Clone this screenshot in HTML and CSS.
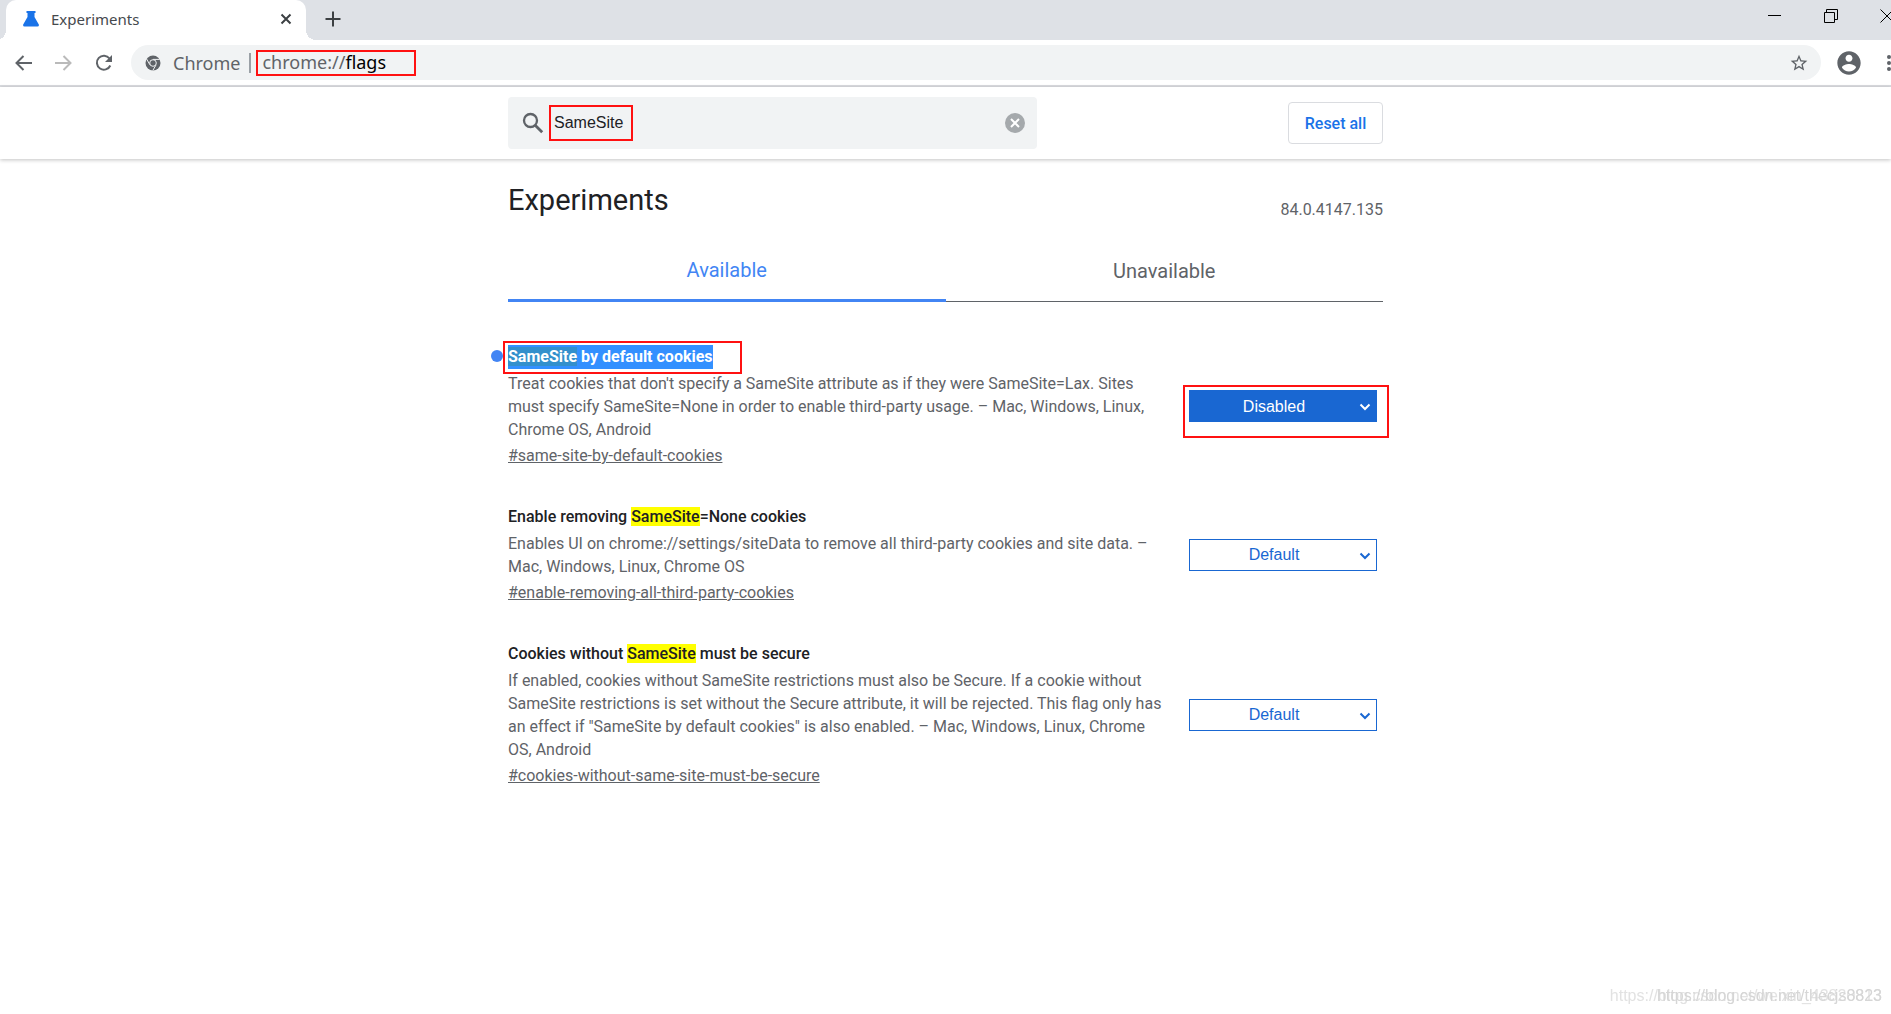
FILE: index.html
```html
<!DOCTYPE html>
<html lang="en">
<head>
<meta charset="utf-8">
<title>Experiments</title>
<link rel="stylesheet" href="styles.css">
</head>
<body>
<div class="tabstrip">
  <div class="tab">
    <svg class="tab-icon" width="16" height="16" viewBox="0 0 16 16"><path fill="#1a73e8" d="M3.500 0h9v2h-1v4l4.300 7.500q.5 1.800-1.300 2h-13q-1.800-.2-1.300-2L4.500 6V2h-1z"/></svg>
    <span class="tab-title">Experiments</span>
    <button class="icon-btn" aria-label="Close tab"><svg width="12" height="12" viewBox="0 0 12 12"><path d="M1.500 1.500l9 9M10.500 1.500l-9 9" stroke="#3c4043" stroke-width="2" fill="none"/></svg></button>
  </div>
  <button class="icon-btn new-tab" aria-label="New tab"><svg width="16" height="16" viewBox="0 0 16 16"><path d="M8 .5v15M.5 8h15" stroke="#3c4043" stroke-width="2" fill="none"/></svg></button>
  <div class="window-controls">
    <button class="icon-btn" aria-label="Minimize"><svg width="14" height="14" viewBox="0 0 14 14"><path d="M0 6.500h13" stroke="#000" fill="none"/></svg></button>
    <button class="icon-btn" aria-label="Restore"><svg width="14" height="14" viewBox="0 0 14 14"><path d="M.5 3.500h10v10H.5zM2.500 3.500v-3h11v10h-3" stroke="#000" fill="none"/></svg></button>
    <button class="icon-btn" aria-label="Close window"><svg width="14" height="14" viewBox="0 0 14 14"><path d="M.5.5l13 13M13.500.5l-13 13" stroke="#000" fill="none"/></svg></button>
  </div>
</div>
<div class="toolbar">
  <div class="nav">
    <button class="icon-btn" aria-label="Back"><svg width="17" height="16" viewBox="0 0 17 16"><path d="M17 8H2M8.500 1L1.500 8l7 7" stroke="#5f6368" stroke-width="2" fill="none"/></svg></button>
    <button class="icon-btn" aria-label="Forward"><svg width="17" height="16" viewBox="0 0 17 16"><path d="M0 8h15M8.500 1l7 7-7 7" stroke="#bababa" stroke-width="2" fill="none"/></svg></button>
    <button class="icon-btn" aria-label="Reload"><svg width="18" height="18" viewBox="0 0 18 18"><path d="M15.300 11.500A7 7 0 1 1 14.500 4.500" stroke="#5f6368" stroke-width="2" fill="none"/><path d="M17 1v7h-7z" fill="#5f6368"/></svg></button>
  </div>
  <div class="omnibox">
    <svg width="16" height="16" viewBox="0 0 16 16"><circle cx="8" cy="8" r="7.500" fill="#5f6368"/><path d="M8 4.400h6.700M4.900 9.800L1.600 4M11.100 9.800L7.800 15.500" stroke="#f1f3f4" fill="none"/><circle cx="8" cy="8" r="3.300" fill="#5f6368" stroke="#f1f3f4"/></svg>
    <span class="chip">Chrome</span>
    <span class="url marked">chrome://<b>flags</b></span>
    <button class="icon-btn star" aria-label="Bookmark"><svg width="20" height="20" viewBox="0 0 24 24"><path fill="#5f6368" d="M22 9.240l-7.190-.62L12 2 9.190 8.630 2 9.240l5.460 4.730L5.820 21 12 17.270 18.180 21l-1.630-7.030L22 9.240zM12 15.400l-3.760 2.270 1-4.280-3.320-2.880 4.380-.38L12 6.100l1.710 4.040 4.380.38-3.320 2.880 1 4.280L12 15.400z"/></svg></button>
  </div>
  <button class="icon-btn profile" aria-label="Profile"><svg width="28" height="28" viewBox="0 0 24 24"><path fill="#5f6368" d="M12 2C6.480 2 2 6.480 2 12s4.480 10 10 10 10-4.480 10-10S17.520 2 12 2zm0 3c1.660 0 3 1.340 3 3s-1.340 3-3 3-3-1.340-3-3 1.340-3 3-3zm0 14.200c-2.500 0-4.710-1.280-6-3.220.03-1.990 4-3.080 6-3.080 1.990 0 5.970 1.090 6 3.080-1.290 1.940-3.500 3.220-6 3.220z"/></svg></button>
  <button class="icon-btn" aria-label="Menu"><svg width="4" height="18" viewBox="0 0 4 18"><g fill="#5f6368"><circle cx="2" cy="3" r="2"/><circle cx="2" cy="9" r="2"/><circle cx="2" cy="15" r="2"/></g></svg></button>
</div>
<header class="page-header">
  <div class="column header-row">
    <div class="search">
      <svg width="22" height="22" viewBox="0 0 22 22"><circle cx="8.500" cy="8.500" r="6.500" stroke="#5f6368" stroke-width="2.300" fill="none"/><path d="M13.200 13.200l7 7" stroke="#5f6368" stroke-width="2.800"/></svg>
      <input class="search-input marked" type="text" value="SameSite" aria-label="Search flags">
      <button class="icon-btn clear" aria-label="Clear search"><svg width="22" height="22" viewBox="0 0 22 22"><circle cx="11" cy="11" r="10" fill="#a5a9ac"/><path d="M7 7l8 8M15 7l-8 8" stroke="#fff" stroke-width="2"/></svg></button>
    </div>
    <button class="reset">Reset all</button>
  </div>
</header>
<main class="column">
  <div class="heading">
    <h1>Experiments</h1>
    <span class="version">84.0.4147.135</span>
  </div>
  <div class="tabs" role="tablist">
    <button class="page-tab selected" role="tab" aria-selected="true">Available</button>
    <button class="page-tab" role="tab" aria-selected="false">Unavailable</button>
  </div>
  <section class="flag">
    <div class="flag-text">
      <h2 class="changed"><label for="f1" class="selection"><mark>SameSite</mark> by default cookies</label></h2>
      <p>Treat cookies that don't specify a SameSite attribute as if they were SameSite=Lax. Sites must specify SameSite=None in order to enable third-party usage. – Mac, Windows, Linux, Chrome OS, Android</p>
      <a href="#f1">#same-site-by-default-cookies</a>
    </div>
    <div class="picker marked">
      <select id="f1" class="on"><option>Disabled</option><option>Default</option><option>Enabled</option></select>
      <svg class="chevron light" width="12" height="8" viewBox="0 0 12 8"><path d="M1.500 1.500L6 6l4.500-4.500" stroke="currentColor" stroke-width="2" fill="none"/></svg>
    </div>
  </section>
  <section class="flag">
    <div class="flag-text">
      <h2><label for="f2">Enable removing <mark>SameSite</mark>=None cookies</label></h2>
      <p>Enables UI on chrome://settings/siteData to remove all third-party cookies and site data. – Mac, Windows, Linux, Chrome OS</p>
      <a href="#f2">#enable-removing-all-third-party-cookies</a>
    </div>
    <div class="picker">
      <select id="f2"><option>Default</option><option>Enabled</option><option>Disabled</option></select>
      <svg class="chevron" width="12" height="8" viewBox="0 0 12 8"><path d="M1.500 1.500L6 6l4.500-4.500" stroke="currentColor" stroke-width="2" fill="none"/></svg>
    </div>
  </section>
  <section class="flag">
    <div class="flag-text">
      <h2><label for="f3">Cookies without <mark>SameSite</mark> must be secure</label></h2>
      <p>If enabled, cookies without SameSite restrictions must also be Secure. If a cookie without SameSite restrictions is set without the Secure attribute, it will be rejected. This flag only has an effect if "SameSite by default cookies" is also enabled. – Mac, Windows, Linux, Chrome OS, Android</p>
      <a href="#f3">#cookies-without-same-site-must-be-secure</a>
    </div>
    <div class="picker">
      <select id="f3"><option>Default</option><option>Enabled</option><option>Disabled</option></select>
      <svg class="chevron" width="12" height="8" viewBox="0 0 12 8"><path d="M1.500 1.500L6 6l4.500-4.500" stroke="currentColor" stroke-width="2" fill="none"/></svg>
    </div>
  </section>
</main>
<div class="watermark"><span>https://blog.csdn.net/weixin_43820813</span><span class="over">https://blog.csdn.net/thecjs8823</span></div>
</body>
</html>
```
FILE: styles.css
```css
*, *::before, *::after { box-sizing: border-box; }
html { overflow: hidden; }
body {
  margin: 0;
  min-height: 100vh;
  background: #fff;
  color: #202124;
  font-family: Roboto, sans-serif;
  font-size: 16px;
}
svg { display: block; flex: none; }
button, input, select { font: inherit; }
.icon-btn { padding: 0; border: 0; background: none; flex: none; }

.tabstrip {
  display: flex;
  align-items: center;
  height: 40px;
  padding-left: 6px;
  overflow: hidden;
  background: #dee1e6;
}
.tab {
  position: relative;
  display: flex;
  align-items: center;
  gap: 12px;
  width: 300px;
  height: 40px;
  padding: 0 14px 2px 17px;
  border-radius: 10px 10px 0 0;
  background: #fff;
}
.tab::before, .tab::after {
  content: "";
  position: absolute;
  bottom: 0;
  width: 10px;
  height: 10px;
}
.tab::before { right: 100%; background: radial-gradient(circle at 0 0, #dee1e6 10px, #fff 10px); }
.tab::after { left: 100%; background: radial-gradient(circle at 100% 0, #dee1e6 10px, #fff 10px); }
.tab-title {
  flex: 1;
  font-family: "Noto Sans", sans-serif;
  font-size: 15px;
  color: #45494d;
}
.new-tab { margin: 0 0 2px 19px; }
.window-controls {
  display: flex;
  gap: 42px;
  margin: 0 -3px 8px auto;
}

.toolbar {
  display: flex;
  align-items: center;
  height: 47px;
  padding-left: 15px;
  border-bottom: 2px solid #dadce0;
}
.nav { display: flex; align-items: center; gap: 23px; width: 116px; }
.omnibox {
  flex: 1;
  display: flex;
  align-items: center;
  height: 35px;
  padding: 0 12px 0 14px;
  border-radius: 18px;
  background: #f1f3f4;
  font-family: "Noto Sans", sans-serif;
  font-size: 18px;
  line-height: 20px;
  color: #5f6368;
}
.chip { margin-left: 12px; padding-right: 9px; border-right: 2px solid #9aa0a6; }
.url {
  width: 160px;
  height: 26px;
  margin-left: 5px;
  padding-left: 4px;
}
.url b { font-weight: 400; color: #000; }
.star { margin-left: auto; }
.profile { margin: 0 24px 0 14px; }
.marked { border: 2px solid #f11; }

.column { width: 875px; max-width: 100%; margin: 0 auto; }
.page-header {
  padding: 10px 0;
  box-shadow: 0 1px 4px rgba(0, 0, 0, .24);
}
.header-row { display: flex; align-items: center; justify-content: space-between; }
.search {
  display: flex;
  align-items: center;
  width: 529px;
  height: 52px;
  padding: 0 11px 0 14px;
  border-radius: 4px;
  background: #f1f3f4;
}
.search-input {
  width: 84px;
  height: 36px;
  margin-left: 5px;
  padding: 0 0 0 3px;
  background: none;
  font-family: "Liberation Sans", sans-serif;
  color: #202124;
}
.clear { margin-left: auto; }
.reset {
  width: 95px;
  height: 42px;
  padding: 0;
  border: 1px solid #dadce0;
  border-radius: 4px;
  background: #fff;
  font-weight: 500;
  color: #1a73e8;
}

.heading {
  display: flex;
  justify-content: space-between;
  padding-top: 24px;
}
h1 { margin: 0; font-size: 29px; font-weight: 400; line-height: 34px; }
.version { padding-top: 16px; line-height: 22px; color: #5f6368; }
.tabs { display: flex; margin: 18px 0 24px; }
.page-tab {
  flex: 1;
  height: 63px;
  padding: 2px 0 0;
  border: 0;
  border-bottom: 1px solid #5f6368;
  background: none;
  font-size: 20px;
  color: #5f6368;
}
.page-tab.selected { border-bottom: 3px solid #4285f4; color: #4285f4; }

.flag {
  display: flex;
  align-items: center;
  justify-content: space-between;
  padding: 19px 0;
}
.flag-text { width: 660px; line-height: 23px; color: #5f6368; }
h2 {
  margin: 0 0 3px;
  font-size: 16px;
  font-weight: 500;
  line-height: 24px;
  color: #202124;
}
.flag p { margin: 0 0 3px; }
.flag a { display: block; width: max-content; color: inherit; }
mark { background: #ff0; color: inherit; }
.changed { position: relative; }
.changed::before {
  content: "";
  position: absolute;
  left: -17px;
  top: 5px;
  width: 12px;
  height: 12px;
  border-radius: 50%;
  background: #4285f4;
}
.changed::after {
  content: "";
  position: absolute;
  left: -5px;
  top: -4px;
  width: 239px;
  height: 33px;
  border: 2px solid #f11;
}
.selection { display: inline-block; background: #3390ff; color: #fff; font-weight: 700; }
.selection mark { background: #3390cc; }
.picker { position: relative; width: 188px; height: 32px; margin-right: 6px; }
.picker.marked { border: 0; }
.picker.marked::after {
  content: "";
  position: absolute;
  inset: -5px -12px -16px -6px;
  border: 2px solid #f11;
  pointer-events: none;
}
select {
  appearance: none;
  width: 100%;
  height: 32px;
  padding: 0 18px 0 0;
  border: 1px solid #1967d2;
  border-radius: 0;
  background: #fff;
  color: #1967d2;
  font-family: "Liberation Sans", sans-serif;
  text-align: center;
  text-align-last: center;
}
select.on { background: #1967d2; color: #fff; }
.chevron {
  position: absolute;
  right: 6px;
  top: 13px;
  color: #1967d2;
  pointer-events: none;
}
.chevron.light { color: #fff; }
.watermark {
  position: fixed;
  right: 9px;
  bottom: 8px;
  font-family: "Liberation Sans", sans-serif;
  line-height: 20px;
  color: #e2e2e2;
}
.watermark .over { position: absolute; right: 0; color: #d6d6d6; }
```
